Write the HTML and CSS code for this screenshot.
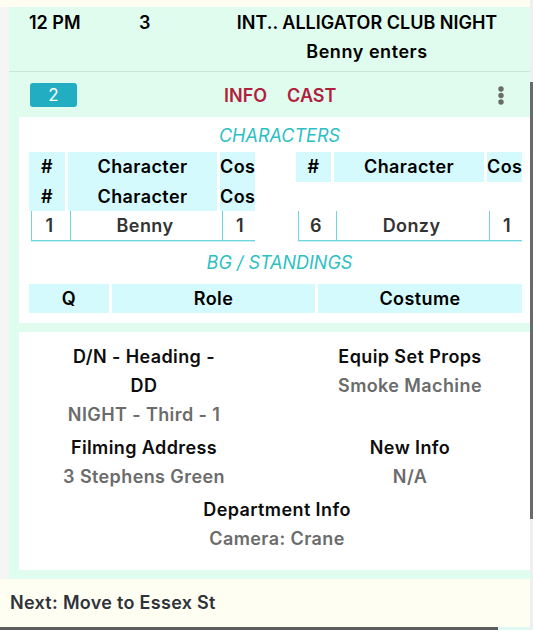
FILE: index.html
```html
<!DOCTYPE html>
<html>
<head>
<meta charset="utf-8">
<link rel="stylesheet" href="styles.css">
</head>
<body>
<div class="page">
  <div class="main">
    <div class="top-strip"></div>
    <div class="body-row">
      <div class="gutter"></div>
      <div class="card">
        <div class="scene-head">
          <div class="sh-time">12 PM</div>
          <div class="sh-num">3</div>
          <div class="sh-set">
            <div>INT.. ALLIGATOR CLUB NIGHT</div>
            <div class="sh-desc">Benny enters</div>
          </div>
        </div>
        <div class="tabs-row">
          <span class="badge">2</span>
          <div class="tabs">
            <span class="tab">INFO</span>
            <span class="tab">CAST</span>
          </div>
          <svg class="dots" width="6" height="19" viewBox="0 0 6 19">
            <circle cx="3" cy="3" r="2.7" fill="#6b6b6b"/>
            <circle cx="3" cy="9.5" r="2.7" fill="#6b6b6b"/>
            <circle cx="3" cy="16" r="2.7" fill="#6b6b6b"/>
          </svg>
        </div>
        <div class="panel cast-panel">
          <div class="section-title">CHARACTERS</div>
          <div class="char-tables">
            <div class="ctable">
              <div class="chead"><div class="hc">#</div><div class="hc">Character</div><div class="hc left">Cos</div></div>
              <div class="chead"><div class="hc">#</div><div class="hc">Character</div><div class="hc left">Cos</div></div>
              <div class="crow"><div class="dc">1</div><div class="dc">Benny</div><div class="dc">1</div></div>
            </div>
            <div class="ctable right">
              <div class="chead"><div class="hc">#</div><div class="hc">Character</div><div class="hc left">Cos</div></div>
              <div class="chead empty"></div>
              <div class="crow"><div class="dc">6</div><div class="dc">Donzy</div><div class="dc">1</div></div>
            </div>
          </div>
          <div class="section-title bg-title">BG / STANDINGS</div>
          <div class="bghead"><div class="hc">Q</div><div class="hc">Role</div><div class="hc">Costume</div></div>
        </div>
        <div class="panel info-panel">
          <div class="info-cell">
            <div class="lbl">D/N - Heading - DD</div>
            <div class="val">NIGHT - Third - 1</div>
          </div>
          <div class="info-cell">
            <div class="lbl">Equip Set Props</div>
            <div class="val">Smoke Machine</div>
          </div>
          <div class="info-cell">
            <div class="lbl">Filming Address</div>
            <div class="val">3 Stephens Green</div>
          </div>
          <div class="info-cell">
            <div class="lbl">New Info</div>
            <div class="val">N/A</div>
          </div>
          <div class="info-cell wide">
            <div class="lbl">Department Info</div>
            <div class="val">Camera: Crane</div>
          </div>
        </div>
      </div>
    </div>
    <div class="footer">Next: Move to Essex St</div>
    <div class="hscroll"><div class="hthumb"></div></div>
  </div>
  <div class="vscroll"><div class="vthumb"></div></div>
</div>
</body>
</html>
```

FILE: styles.css
```css
* { box-sizing: border-box; }
html, body { margin: 0; padding: 0; }
body {
  font-family: Inter, "DejaVu Sans", sans-serif;
  font-weight: 600;
  font-size: 18px;
  letter-spacing: 0.4px;
  color: #111;
  background: #fff;
  overflow: hidden;
}
.page {
  display: flex;
  width: 533px;
  height: 630px;
}
.main {
  width: 530px;
  display: flex;
  flex-direction: column;
}
.top-strip {
  height: 7px;
  background: #fffdf2;
}
.body-row {
  display: flex;
  height: 572px;
}
.gutter {
  width: 9px;
  background: #f5f5f6;
}
.card {
  width: 521px;
  background: #dffcef;
  padding: 0 0 9px 0;
  display: flex;
  flex-direction: column;
}
.scene-head {
  display: grid;
  grid-template-columns: 110px 80px 296px;
  padding: 1px 0 5px 20px;
  line-height: 29px;
  font-size: 18px;
  letter-spacing: 0;
  color: #000;
  border-bottom: 1px solid #c7e8d8;
}
.sh-set { text-align: center; }
.sh-desc { letter-spacing: 0.55px; }
.tabs-row {
  display: flex;
  align-items: center;
  height: 45px;
  padding: 1px 26px 0 21px;
}
.badge {
  width: 47px;
  height: 24px;
  border-radius: 3px;
  background: #23adc3;
  color: #fff;
  font-weight: 400;
  font-size: 17px;
  letter-spacing: 0;
  display: flex;
  align-items: center;
  justify-content: center;
}
.tabs {
  display: flex;
  gap: 20px;
  margin-left: 147px;
  color: #b21f3d;
  font-size: 18px;
  letter-spacing: 0;
}
.dots { margin-left: auto; }
.panel {
  background: #fff;
  margin-left: 10px;
}
.cast-panel {
  padding: 4px 0 10px 10px;
  margin-bottom: 9px;
}
.section-title {
  text-align: center;
  font-style: italic;
  font-weight: 400;
  color: #2cbfc3;
  line-height: 29px;
  font-size: 18px;
  letter-spacing: 0;
}
.char-tables {
  display: flex;
  gap: 41px;
  margin-top: 2px;
}
.ctable { width: 226px; }
.chead, .crow {
  display: grid;
  grid-template-columns: 36px 149px 35px;
  column-gap: 3px;
}
.ctable.right .chead, .ctable.right .crow {
  grid-template-columns: 35px 150px 35px;
}
.chead { height: 29.5px; }
.hc {
  background: #d4fafd;
  text-align: center;
  line-height: 29.5px;
  color: #000;
  white-space: nowrap;
  overflow: hidden;
}
.hc.left { text-align: left; }
.crow {
  height: 30px;
  border-bottom: 1px solid #6fd6de;
  box-shadow: 0 1px 0 #c9f1f4;
  margin-left: 2px;
  color: #333;
}
.dc {
  border-left: 1px solid #6fd6de;
  text-align: center;
  line-height: 29px;
}
.bg-title { margin-top: 7px; }
.bghead {
  display: grid;
  grid-template-columns: 80px 203px 204px;
  column-gap: 3px;
  height: 29px;
  margin-top: 7px;
}
.bghead .hc { line-height: 29px; }
.info-panel {
  display: grid;
  grid-template-columns: 238px 238px;
  column-gap: 28px;
  padding: 10px 0 13px 6px;
  flex: 1;
  align-content: start;
}
.info-cell {
  text-align: center;
  padding: 0 36px;
  margin-bottom: 4px;
  line-height: 29px;
}
.info-cell.wide {
  grid-column: 1 / 3;
}
.lbl { color: #0d0d0d; }
.val { color: #6b6b6b; }
.footer {
  height: 48px;
  background: #fffef3;
  padding-left: 10px;
  line-height: 48px;
  color: #30333a;
  font-size: 18px;
  letter-spacing: 0.3px;
}
.hscroll {
  height: 3px;
  background: #dff8f2;
}
.hthumb {
  width: 498px;
  height: 3px;
  background: #5c5c5c;
}
.vscroll {
  width: 3px;
  background: #efefef;
  padding-top: 82px;
}
.vthumb {
  height: 437px;
  background: #6a6a6a;
}
```
